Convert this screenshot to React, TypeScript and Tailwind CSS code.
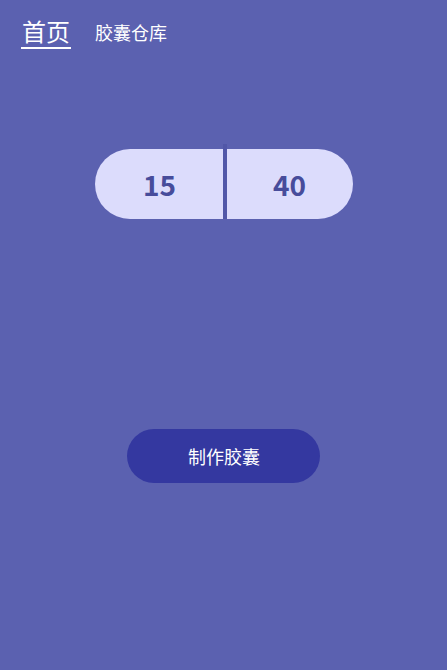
import React from 'react';

export default function App() {
  return (
    <div
      className="w-full h-[670px] bg-[#5b61b0] flex flex-col"
      style={{ fontFamily: '"Noto Sans CJK SC", "Noto Sans", sans-serif' }}
    >
      {/* top tabs */}
      <div className="flex items-end gap-[24px] pl-[21px] pt-[16px]">
        <div className="flex flex-col items-center">
          <span className="text-[24px] leading-[30px] text-white">首页</span>
          <div className="mt-[1px] h-[2px] w-[50px] bg-white" />
        </div>
        <span className="text-[18px] leading-[24px] text-white mb-[5px]">胶囊仓库</span>
      </div>

      {/* capsule */}
      <div className="mt-[100px] flex justify-center">
        <div className="flex items-center">
          <div className="w-[128px] h-[70px] rounded-l-[35px] bg-[#dcdcfc] flex items-center justify-center pl-[2px]">
            <span className="text-[28px] font-bold text-[#474c9b]">15</span>
          </div>
          <div className="w-[4px] h-[75px] -mt-[5px] bg-[#5157a8]" />
          <div className="w-[126px] h-[70px] rounded-r-[35px] bg-[#dcdcfc] flex items-center justify-center">
            <span className="text-[28px] font-bold text-[#474c9b]">40</span>
          </div>
        </div>
      </div>

      {/* make button */}
      <div className="mt-[210px] flex justify-center">
        <button className="w-[193px] h-[54px] rounded-full bg-[#3438a0] text-white text-[18px] pl-[1px]">
          制作胶囊
        </button>
      </div>
    </div>
  );
}
